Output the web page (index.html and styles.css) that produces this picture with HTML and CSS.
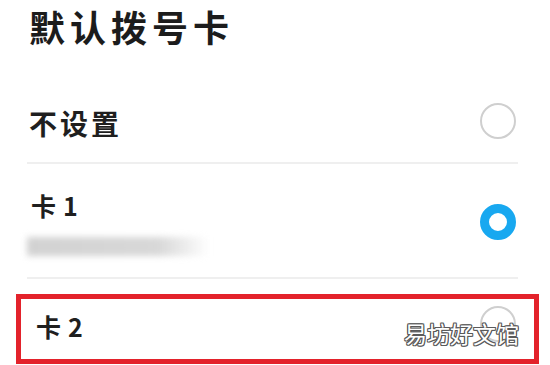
FILE: index.html
```html
<!DOCTYPE html>
<html lang="zh">
<head>
<meta charset="utf-8">
<title>默认拨号卡</title>
<link rel="stylesheet" href="styles.css">
</head>
<body>
<div class="page">
  <div class="list">
    <h1 class="title">默认拨号卡</h1>
    <div class="row row-first">
      <span class="label label-none">不设置</span>
      <span class="radio"></span>
    </div>
    <div class="row row-second">
      <div class="stack">
        <span class="label label-card">卡1</span>
        <span class="masked"></span>
      </div>
      <span class="radio radio-on"></span>
    </div>
  </div>
  <div class="row highlight">
    <span class="label label-card">卡2</span>
    <span class="radio radio-last"></span>
  </div>
  <div class="watermark">易坊好文馆</div>
</div>
</body>
</html>
```

FILE: styles.css
```css
html, body {
  margin: 0;
  padding: 0;
  background: #ffffff;
}

body {
  width: 550px;
  height: 365px;
  overflow: hidden;
  font-family: "Noto Sans CJK SC", "Noto Sans", sans-serif;
  color: #1f1f1f;
}

.page {
  position: relative;
  width: 550px;
  height: 365px;
}

.list {
  padding: 0 32px 0 27px;
}

.title {
  margin: 0;
  height: 80px;
  padding: 0 0 0 2px;
  box-sizing: border-box;
  font-size: 36px;
  line-height: 52px;
  font-weight: 700;
  letter-spacing: 5px;
  color: #1c1c1c;
}

.row {
  display: flex;
  align-items: center;
  justify-content: space-between;
  box-sizing: border-box;
}

.row-first {
  height: 84px;
  border-bottom: 2px solid #efefef;
  padding-right: 2px;
}

.row-second {
  height: 115px;
  border-bottom: 2px solid #efefef;
  padding-right: 2px;
}

.stack {
  display: flex;
  flex-direction: column;
  padding-top: 6px;
}

.label {
  font-weight: 700;
  color: #1f1f1f;
}

.label-none {
  font-size: 28px;
  line-height: 32px;
  letter-spacing: 3px;
  padding-left: 2px;
  margin-top: 4px;
}

.label-card {
  font-size: 25px;
  line-height: 28px;
  letter-spacing: 7px;
  padding-left: 4px;
}

.masked {
  display: block;
  width: 182px;
  height: 19px;
  margin-top: 18px;
  background: linear-gradient(90deg, #d2d2d2 0%, #d8d8d8 72%, rgba(230, 230, 230, 0) 100%);
  filter: blur(3px);
}

.radio {
  display: block;
  width: 36px;
  height: 36px;
  box-sizing: border-box;
  border-radius: 50%;
  border: 2px solid #cfcfcf;
  background: #ffffff;
}

.radio-on {
  border: 9px solid #18a8f0;
  margin-top: 2px;
}

.highlight {
  height: 70px;
  margin: 15px 11px 0 16px;
  border: 5px solid #e3222b;
  padding: 0 18px 0 11px;
  align-items: flex-start;
}

.highlight .label-card {
  margin-top: 13px;
}

.radio-last {
  margin-top: 7px;
}

.watermark {
  position: absolute;
  left: 404px;
  top: 318px;
  font-family: "Noto Sans CJK SC", sans-serif;
  font-size: 23px;
  line-height: 30px;
  font-weight: 400;
  color: #ffffff;
  text-shadow:
    1px 0 0 #5a5a5a, -1px 0 0 #5a5a5a, 0 1px 0 #5a5a5a, 0 -1px 0 #5a5a5a,
    1px 1px 0 #5a5a5a, -1px -1px 0 #5a5a5a, 1px -1px 0 #5a5a5a, -1px 1px 0 #5a5a5a;
}
```
